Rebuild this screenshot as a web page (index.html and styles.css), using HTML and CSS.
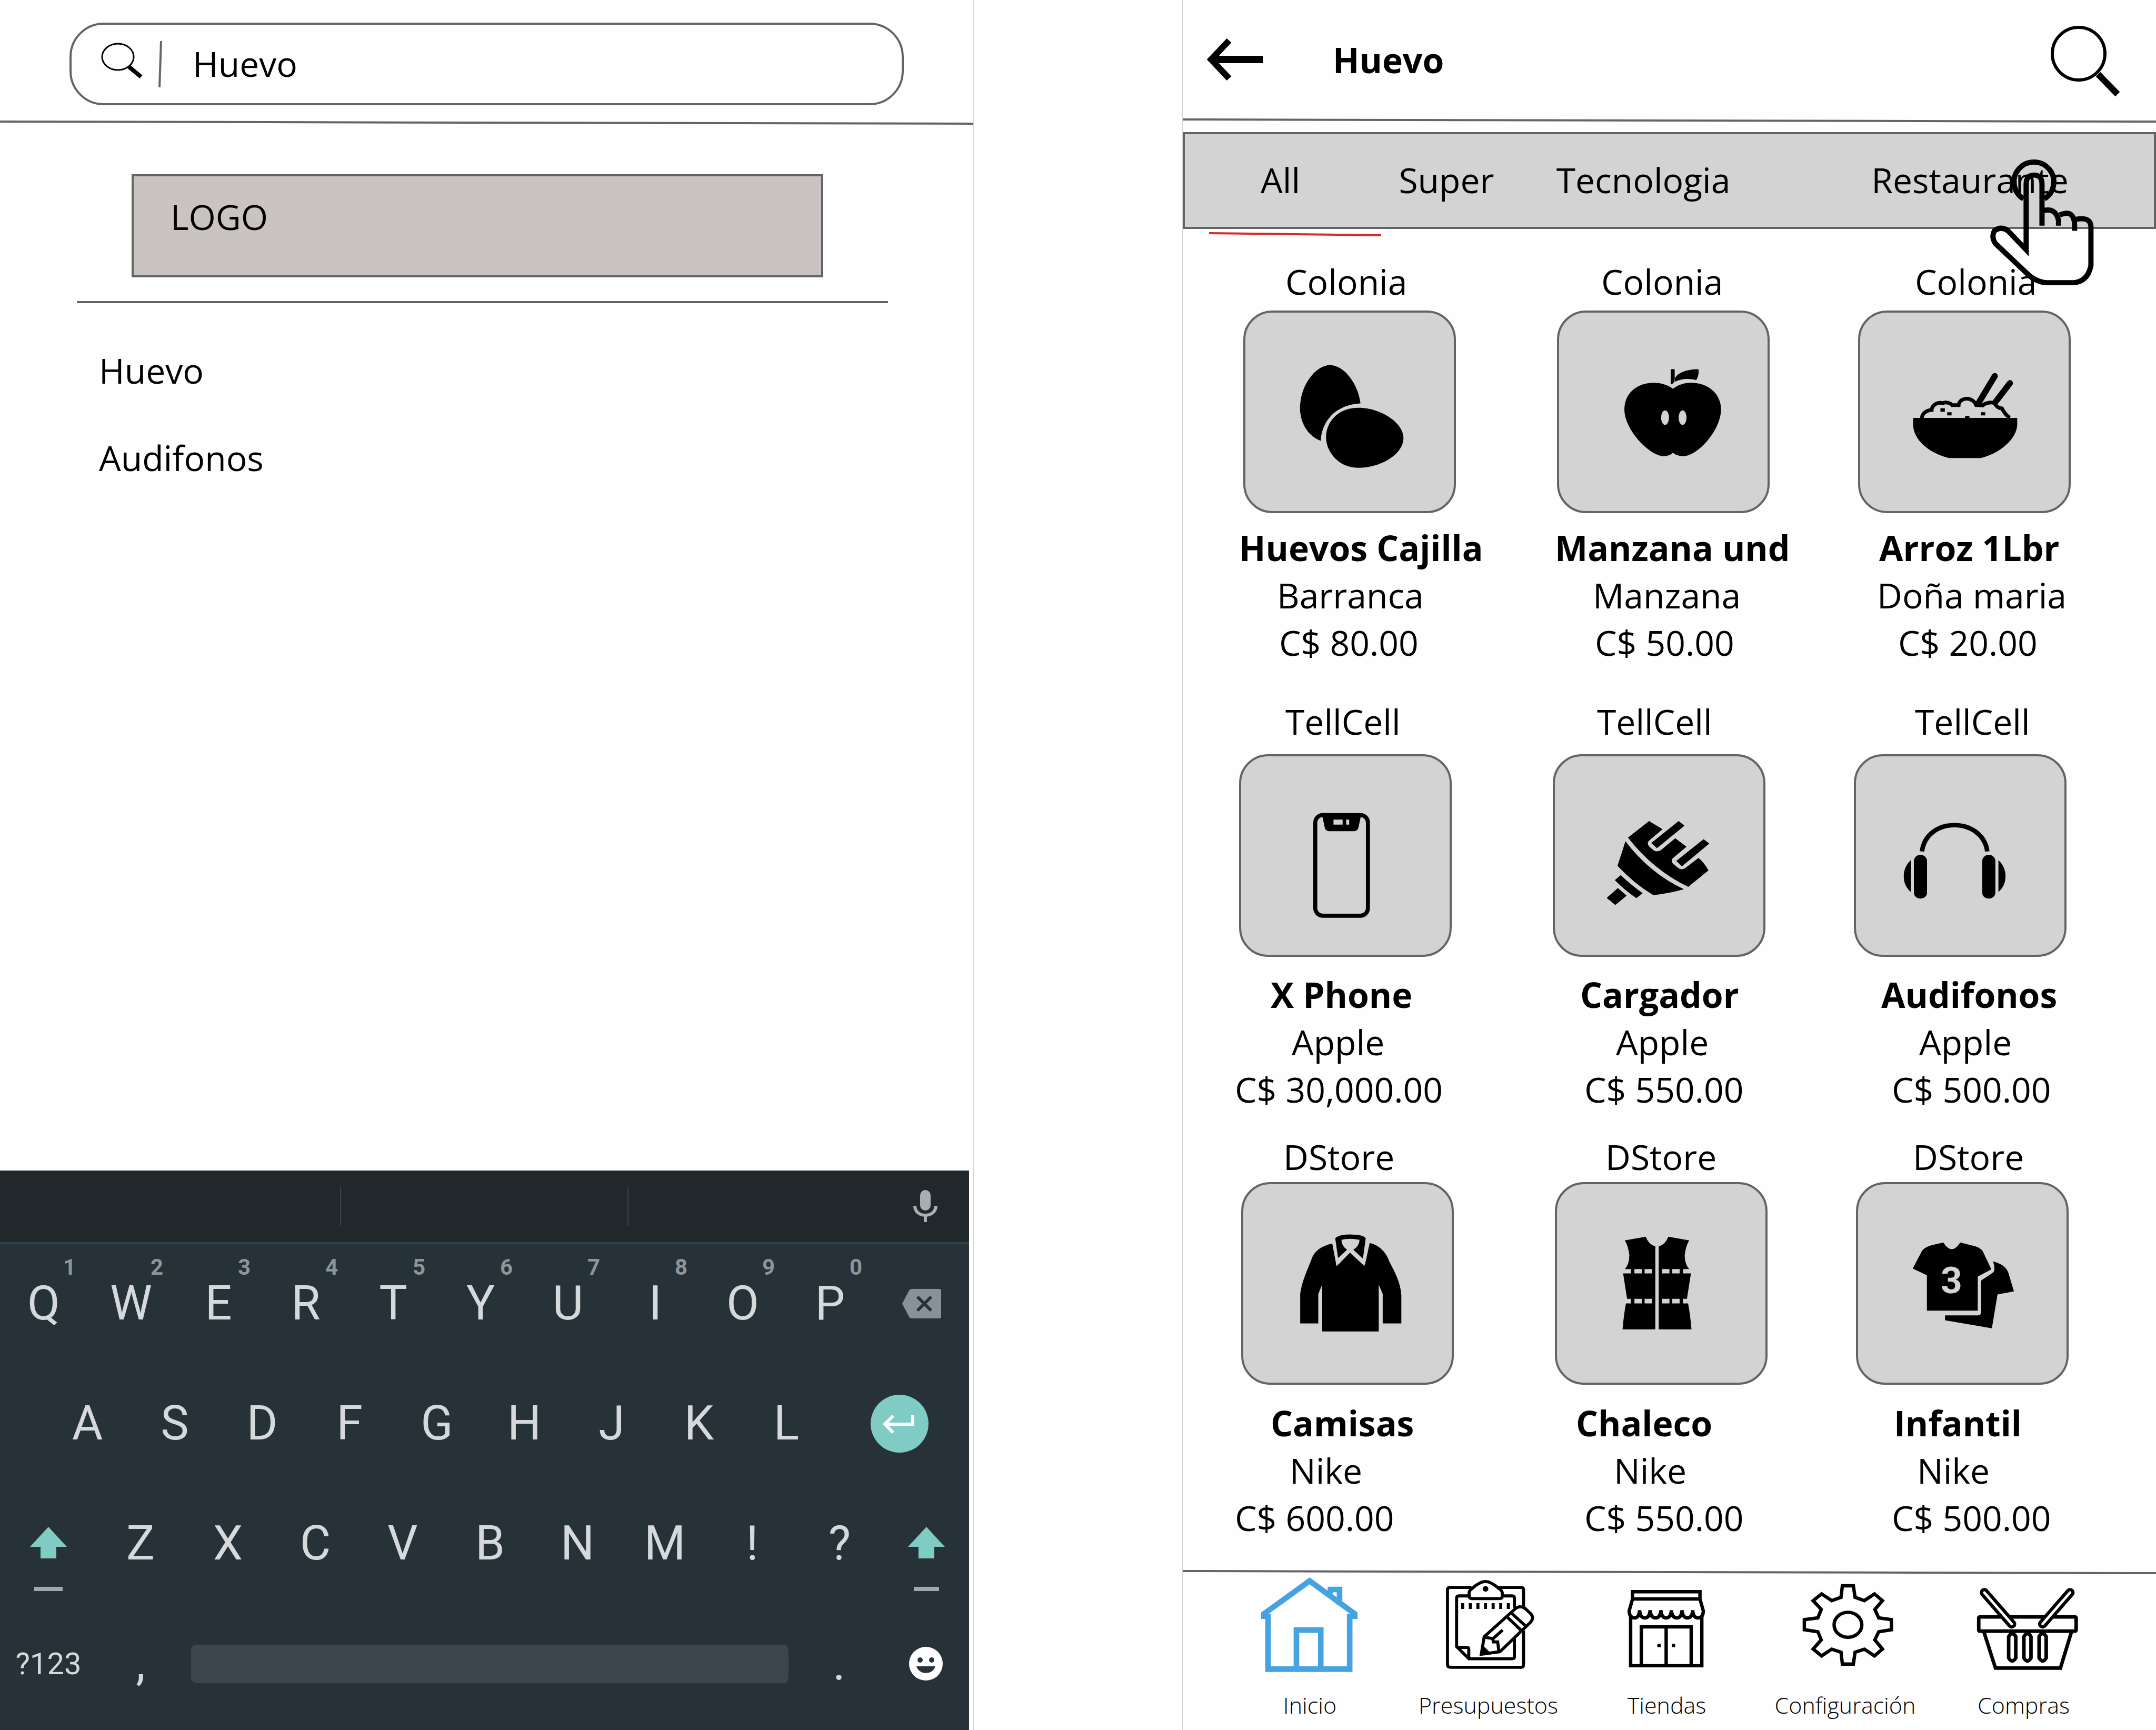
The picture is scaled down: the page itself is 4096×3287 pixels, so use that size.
FILE: index.html
```html
<!DOCTYPE html>
<html lang="es">
<head>
<meta charset="utf-8">
<meta name="viewport" content="width=device-width, initial-scale=1">
<title>Huevo</title>
<link rel="stylesheet" href="styles.css">
</head>
<body>
<main class="screens">

  <section class="screen search-screen">
    <form class="search-box" role="search">
      <label class="search-label" for="q" aria-label="Buscar">
        <svg class="search-icon" viewBox="0 0 80 82"><ellipse cx="32" cy="27" rx="30" ry="25" fill="none" stroke="#000" stroke-width="3"/><path d="M53 46L76 65" stroke="#000" stroke-width="8"/></svg>
      </label>
      <svg class="search-bar" viewBox="0 0 8 88"><path d="M6 0L3 88" stroke="#646464" stroke-width="4"/></svg>
      <input class="search-input" id="q" type="text" value="Huevo">
    </form>
    <svg class="rule" viewBox="0 0 100 8" preserveAspectRatio="none"><path d="M0 2L100 6" stroke="#646464" stroke-width="4" vector-effect="non-scaling-stroke"/></svg>
    <div class="logo">LOGO</div>
    <hr class="divider">
    <nav class="suggestions">
      <a href="#">Huevo</a>
      <a href="#">Audifonos</a>
    </nav>

    <div class="keyboard">
      <div class="strip">
        <span></span><span></span>
        <button class="key mic" aria-label="Voz"><svg width="46" height="62" viewBox="0 0 46 62"><rect x="13" y="0" width="20" height="39" rx="10" fill="#a9aeb0"/><path d="M3 30C3 54 43 54 43 30M23 48V61" fill="none" stroke="#a9aeb0" stroke-width="6"/></svg></button>
      </div>
      <div class="keys keys-top">
        <button class="key">Q<sup>1</sup></button><button class="key">W<sup>2</sup></button><button class="key">E<sup>3</sup></button><button class="key">R<sup>4</sup></button><button class="key">T<sup>5</sup></button><button class="key">Y<sup>6</sup></button><button class="key">U<sup>7</sup></button><button class="key">I<sup>8</sup></button><button class="key">O<sup>9</sup></button><button class="key">P<sup>0</sup></button>
        <button class="key" aria-label="Borrar"><svg width="74" height="56" viewBox="0 0 74 56"><path d="M18 0H70Q74 0 74 4V52Q74 56 70 56H18Q15 56 13 53L0 28L13 3Q15 0 18 0Z" fill="#87919a"/><path d="M29 15L55 41M55 15L29 41" stroke="#263238" stroke-width="6"/></svg></button>
      </div>
      <div class="keys keys-home">
        <button class="key">A</button><button class="key">S</button><button class="key">D</button><button class="key">F</button><button class="key">G</button><button class="key">H</button><button class="key">J</button><button class="key">K</button><button class="key">L</button>
        <button class="key" aria-label="Intro"><svg width="112" height="112" viewBox="0 0 112 112"><circle cx="56" cy="56" r="55" fill="#80cbc4"/><path d="M81 40V57H30M44 41L28 57L44 73" fill="none" stroke="#fff" stroke-width="6"/></svg></button>
      </div>
      <div class="keys keys-low">
        <button class="key" aria-label="Mayúsculas"><svg width="74" height="184" viewBox="0 0 74 184"><path d="M37 60L72 98H52V120H22V98H2Z" fill="#80cbc4"/><path d="M10 178H64" stroke="#a0a8ab" stroke-width="8"/></svg></button>
        <button class="key">Z</button><button class="key">X</button><button class="key">C</button><button class="key">V</button><button class="key">B</button><button class="key">N</button><button class="key">M</button><button class="key">!</button><button class="key">?</button>
        <button class="key" aria-label="Mayúsculas"><svg width="74" height="184" viewBox="0 0 74 184"><path d="M37 60L72 98H52V120H22V98H2Z" fill="#80cbc4"/><path d="M13 178H61" stroke="#a0a8ab" stroke-width="8"/></svg></button>
      </div>
      <div class="keys keys-space">
        <button class="key key-mode">?123</button>
        <button class="key">,</button>
        <button class="key space" aria-label="Espacio"></button>
        <button class="key">.</button>
        <button class="key" aria-label="Emoji"><svg width="64" height="64" viewBox="0 0 64 64"><circle cx="32" cy="32" r="32" fill="#fff"/><circle cx="21" cy="25" r="5" fill="#263238"/><circle cx="43" cy="25" r="5" fill="#263238"/><path d="M14 37H50C45 54 19 54 14 37Z" fill="#263238"/></svg></button>
      </div>
    </div>
  </section>

  <section class="screen results-screen">
    <header class="topbar">
      <button class="icon-button" aria-label="Volver"><svg width="108" height="82" viewBox="0 0 108 82"><path d="M8 41H107" stroke="#000" stroke-width="14"/><path d="M43 5L9 41L43 77" fill="none" stroke="#000" stroke-width="12"/></svg></button>
      <h1 class="title">Huevo</h1>
      <button class="icon-button" aria-label="Buscar"><svg width="132" height="142" viewBox="0 0 132 142"><circle cx="53" cy="60" r="50" fill="none" stroke="#000" stroke-width="6"/><path d="M90 99L127 137" stroke="#000" stroke-width="12"/></svg></button>
    </header>
    <svg class="rule" viewBox="0 0 100 8" preserveAspectRatio="none"><path d="M0 2L100 6" stroke="#646464" stroke-width="4" vector-effect="non-scaling-stroke"/></svg>
    <nav class="tabs">
      <button class="tab">All</button>
      <button class="tab">Super</button>
      <button class="tab">Tecnologia</button>
      <button class="tab">Restaurante</button>
    </nav>
    <svg class="tab-marker" viewBox="0 0 327 8"><path d="M0 2L327 6" stroke="#dc2828" stroke-width="4"/></svg>

    <svg class="pointer" viewBox="0 0 780 840" fill="none" stroke="#000" stroke-width="31"><path d="M272 276A118 118 0 1 1 396 276"/><path d="M382 435V190Q382 135 335 135Q288 135 288 190V578L180 465Q140 435 100 465Q80 500 105 540L290 715Q345 770 410 773H570Q655 765 672 670V440Q670 380 582 398M575 465V425Q570 335 487 372M480 435V405Q465 325 385 347"/></svg>

    <div class="shelf shelf-food">
      <article class="product">
        <p class="in-80">Colonia</p>
        <div class="tile"><svg viewBox="4 4 411 392"><g transform="translate(-52.5 -32) scale(1.1161 .4783)"><path d="M200 292C175 292 147 375 147 470C147 540 165 590 184 605C184 540 205 455 254 450C250 370 225 292 200 292Z"/><path d="M250 468C290 468 330 530 330 593C330 660 290 716 250 716C215 716 193 650 193 590C193 525 215 468 250 468Z"/></g></svg></div>
        <h2 class="out-8">Huevos Cajilla</h2><p class="in-64">Barranca</p><p class="in-68">C$ 80.00</p>
      </article>
      <article class="product">
        <p class="in-84">Colonia</p>
        <div class="tile"><svg viewBox="4 4 411 392"><g transform="translate(-671 -32) scale(1.1161 .4783)"><path d="M806 390C798 375 785 365 772 365C742 365 720 410 720 475C720 560 765 668 790 668C797 668 802 662 806 654C810 662 816 668 824 668C850 668 891 560 891 475C891 410 868 365 838 365C825 365 814 375 806 390Z"/><path d="M802 309H809V360L804 372L802 368ZM851 309C830 309 808 325 808 362C820 348 835 346 847 354C851 340 852 325 851 309Z"/><g fill="#d3d3d3"><ellipse cx="792" cy="509" rx="7" ry="30"/><ellipse cx="823" cy="509" rx="7" ry="30"/></g></g></svg></div>
        <h2 class="out-4">Manzana und</h2><p class="in-68">Manzana</p><p class="in-72">C$ 50.00</p>
      </article>
      <article class="product">
        <p class="in-108">Colonia</p>
        <div class="tile"><svg viewBox="4 4 411 392"><g transform="translate(95.5 108) scale(.3333)"><path d="M38 312H655V350C655 430 560 520 440 550H250C130 520 38 440 38 350Z"/><path d="M90 312C92 285 120 265 148 265C150 235 185 216 215 224C235 215 260 225 270 236H308C310 210 335 198 357 198C380 198 405 215 412 236L450 238C470 220 500 218 520 224C530 245 545 255 565 256C575 275 590 300 612 310" fill="none" stroke="#000" stroke-width="22"/><path d="M522 64L425 225M612 106L528 215" stroke="#000" stroke-width="36" stroke-linecap="round"/><path d="M200 255H226V275H200ZM240 278H266V297H240ZM440 278H466V297H440ZM346 300H372V314H346Z"/></g></svg></div>
        <h2 class="in-40">Arroz 1Lbr</h2><p class="in-36">Doña maria</p><p class="in-76">C$ 20.00</p>
      </article>
    </div>

    <div class="shelf shelf-tech">
      <article class="product">
        <p class="in-88">TellCell</p>
        <div class="tile"><svg viewBox="4 4 411 392"><rect x="150" y="120" width="104" height="199" rx="15" fill="none" stroke="#000" stroke-width="8"/><path d="M163 118H241L235 146Q233 152 226 152H178Q171 152 169 146Z"/><path d="M186 129H204V139H186ZM211 129H217V139H211Z" fill="#d3d3d3"/></svg></div>
        <h2 class="in-60">X Phone</h2><p class="in-100">Apple</p><p class="out-8">C$ 30,000.00</p>
      </article>
      <article class="product">
        <p class="in-84">TellCell</p>
        <div class="tile"><svg viewBox="4 4 411 392"><g transform="translate(88 112) scale(.3333)"><path d="M305 60L385 108L305 176Q290 190 305 210L335 235Q355 245 375 232L460 162L527 212L448 278Q430 293 447 312L480 340Q500 352 520 338L598 278Q635 310 657 352L537 450Q330 350 180 158Z"/><path d="M480 60L515 87L352 220L318 190ZM628 167L662 193L500 328L466 296Z"/><path d="M165 180Q310 370 512 464Q420 490 330 499Q215 430 118 325Z"/><path d="M137 380Q200 440 267 487L230 517Q160 470 102 410ZM120 457L172 502L105 557L54 515Z"/></g></svg></div>
        <h2 class="in-52">Cargador</h2><p class="in-120">Apple</p><p class="in-60">C$ 550.00</p>
      </article>
      <article class="product">
        <p class="in-116">TellCell</p>
        <div class="tile"><svg viewBox="4 4 411 392"><path d="M134 192C138 160 165 140 198 140S259 160 263 192" fill="none" stroke="#000" stroke-width="9"/><rect x="118" y="199" width="26" height="86" rx="12"/><rect x="253" y="199" width="26" height="86" rx="12"/><path d="M112 209Q98 222 98 241T112 272ZM285 209Q299 222 299 241T285 272Z"/></svg></div>
        <h2 class="in-52">Audifonos</h2><p class="in-124">Apple</p><p class="in-72">C$ 500.00</p>
      </article>
    </div>

    <div class="shelf shelf-clothes">
      <article class="product">
        <p class="in-80">DStore</p>
        <div class="tile"><svg viewBox="4 4 411 392"><g transform="translate(-48 -102) scale(1.1161 .5293)"><path d="M204 422L211 497H216L235 452L257 497H262L270 420C290 430 300 460 305 490C315 530 325 570 326 615V720H293V610L286 575V750H186V575L179 610V720H147V610C150 560 160 520 167 480C172 450 185 430 204 422Z"/><path d="M209 402Q215 388 235 388Q258 388 263 402L258 478L241 445Q252 430 252 408Q235 400 220 408Q220 430 230 445L214 476Z"/><path d="M206 418L213 497L235 450L259 497L267 418" fill="none" stroke="#d3d3d3" stroke-width="5"/></g></svg></div>
        <h2 class="in-56">Camisas</h2><p class="in-92">Nike</p><p class="out-12">C$ 600.00</p>
      </article>
      <article class="product">
        <p class="in-96">DStore</p>
        <div class="tile"><svg viewBox="4 4 411 392"><g transform="translate(-666 -102) scale(1.1161 .5293)"><path d="M720 410L757 396Q762 425 774 432V517H720Q728 500 728 465Q726 430 720 410ZM834 410L797 396Q792 425 780 432V517H834Q826 500 826 465Q828 430 834 410Z"/><path d="M717 533H774V628H724ZM837 533H780V628H830ZM722 645H774V742H716Q718 690 722 645ZM832 645H780V742H838Q836 690 832 645Z"/><path d="M731 515H737V535H731ZM750 515H755V535H750ZM768 515H774V535H768ZM780 515H786V535H780ZM799 515H804V535H799ZM817 515H823V535H817ZM731 626H737V647H731ZM750 626H755V647H750ZM768 626H774V647H768ZM780 626H786V647H780ZM799 626H804V647H799ZM817 626H823V647H817Z"/></g></svg></div>
        <h2 class="in-40">Chaleco</h2><p class="in-112">Nike</p><p class="in-56">C$ 550.00</p>
      </article>
      <article class="product">
        <p class="in-108">DStore</p>
        <div class="tile"><svg viewBox="4 4 411 392"><g transform="translate(-1260 -102) scale(1.1161 .5293)"><path d="M1283 418Q1298 468 1313 418L1340 432Q1352 440 1355 460L1368 518L1344 545V672H1254V540L1229 515L1245 450Q1250 435 1262 428Z"/><path d="M1371 488Q1393 500 1398 530L1408 600L1379 612L1369 738L1286 708V690H1343Q1350 690 1350 678V560L1371 530Q1376 520 1371 488Z"/></g><text class="shirt-number" x="188" y="219">3</text></svg></div>
        <h2 class="in-72">Infantil</h2><p class="in-116">Nike</p><p class="in-68">C$ 500.00</p>
      </article>
    </div>

    <svg class="rule rule-bottom" viewBox="0 0 100 8" preserveAspectRatio="none"><path d="M0 2L100 6" stroke="#646464" stroke-width="4" vector-effect="non-scaling-stroke"/></svg>
    <nav class="bottom-nav">
      <a href="#" aria-current="page"><svg viewBox="0 0 220 200" fill="none" stroke="#46a3e2" stroke-width="11"><path d="M19 88V78L109 13L198 78V88"/><path d="M27 78V187H188V78M83 187V110H131V187M150 38V30H168V60"/></svg>Inicio</a>
      <a href="#"><svg viewBox="0 0 220 200"><g transform="translate(-7 -4) scale(.3333)" fill="none" stroke="#000" stroke-width="18"><path d="M250 90H122Q108 90 108 105V545Q108 562 125 562H545Q558 562 558 545V345M410 90H545Q558 90 558 105V205"/><path d="M235 140H175Q162 140 162 155V440L235 512H490Q504 512 504 500V385M430 140H490Q504 140 504 152V210M165 445H225Q234 445 234 455V510"/><path d="M236 145V118Q240 105 255 95Q300 55 333 55Q365 55 410 95Q428 105 432 120V145Q430 156 415 156H252Q240 156 236 145Z"/><circle cx="333" cy="98" r="17" fill="#000" stroke="none"/><path d="M198 183V217M243 183V217M288 183V217M333 183V217M378 183V217M423 183V217M468 183V217"/><path d="M325 382L510 215Q535 195 565 212L600 245Q622 270 600 295L418 470L308 485ZM482 238L570 318M458 262L545 345M325 384L375 392L380 412H405L412 470M376 394L434 342"/><path d="M315 430L358 472L303 487Z" fill="#000" stroke="none"/></g></svg>Presupuestos</a>
      <a href="#"><svg viewBox="0 0 220 200"><g transform="translate(21 6) scale(.3333)" fill="none" stroke="#000" stroke-width="20"><path d="M63 128V85H462V128ZM63 128L43 200Q45 240 75 240Q102 240 105 195Q108 240 136 240Q164 240 167 195Q170 240 199 240Q228 240 231 195Q234 240 262 240Q290 240 293 195Q296 240 325 240Q353 240 356 195Q359 240 388 240Q416 240 419 195Q422 240 450 240Q480 240 482 200L462 128"/><path d="M52 225V523H473V225M115 523V293H410V523M262 293V523"/><path d="M210 403H230M295 403H315"/></g></svg>Tiendas</a>
      <a href="#"><svg viewBox="0 0 220 200"><g transform="translate(-331 6) scale(.3333)" fill="none" stroke="#000" stroke-width="20"><path d="M1305 50H1370L1380 118L1435 138L1495 98L1542 138L1497 190L1520 240L1595 250V310L1520 322L1497 370L1542 424L1495 465L1435 425L1380 443L1370 513H1305L1297 443L1242 425L1182 465L1132 424L1180 370L1160 322L1080 310V250L1160 240L1180 190L1132 138L1182 98L1242 138L1297 118Z"/><ellipse cx="1338" cy="281" rx="82" ry="74"/></g></svg>Configuración</a>
      <a href="#"><svg viewBox="0 0 220 200" fill="none" stroke="#000" stroke-width="7"><rect x="21" y="84" width="192" height="28" rx="2"/><path d="M31 113L54 185H182L204 113"/><path d="M80 165V123Q87 111 94 123V165Q87 177 80 165ZM110 165V123Q117 111 124 123V165Q117 177 110 165ZM140 165V123Q147 111 154 123V165Q147 177 140 165Z"/><path d="M32 36L86 98M201 36L147 98" stroke-width="18" stroke-linecap="round"/><path d="M32 36L86 98M201 36L147 98" stroke="#fefefe" stroke-width="5" stroke-linecap="round"/></svg>Compras</a>
    </nav>
  </section>
</main>
</body>
</html>
```
FILE: styles.css
```css
* { box-sizing: border-box; }

body {
  margin: 0;
  background: #fff;
  color: #000;
  font: 66px/90px "Open Sans", "Noto Sans", sans-serif;
}

h1, h2, p { margin: 0; font-size: inherit; font-weight: inherit; }
a { color: inherit; text-decoration: none; }
svg { display: block; flex: none; }

button {
  margin: 0;
  padding: 0;
  border: 0;
  background: none;
  color: inherit;
  font: inherit;
}

.screens {
  display: grid;
  grid-template-columns: 1850fr 1850fr;
  column-gap: 396px;
  min-height: 100vh;
}

.screen {
  position: relative;
  display: flex;
  flex-direction: column;
  min-width: 0;
  background: #fefefe;
}

.search-screen { border-right: 1px solid #d4d4d4; }
.results-screen { border-left: 1px solid #d4d4d4; }

.rule { width: 100%; height: 8px; }

/* Search screen */
.search-box {
  display: flex;
  align-items: center;
  height: 157px;
  margin: 43px 132px 29px;
  padding: 0 56px;
  border: 4px solid #646464;
  border-radius: 65px;
}

.search-icon { width: 80px; height: 82px; }
.search-bar { width: 8px; height: 88px; margin: 0 58px 0 28px; }

.search-input {
  flex: 1;
  min-width: 0;
  padding: 0 0 4px;
  border: 0;
  outline: 0;
  background: none;
  color: #000;
  font: inherit;
}

.logo {
  height: 196px;
  margin: 94px 285px 0 250px;
  padding: 31px 70px;
  border: 4px solid #646464;
  background: #c9c3c1;
}

.divider {
  width: auto;
  height: 4px;
  margin: 45px 162px 0 146px;
  border: 0;
  background: #646464;
}

.suggestions {
  display: flex;
  flex-direction: column;
  align-items: flex-start;
  gap: 76px;
  padding: 82px 188px;
}

/* Keyboard */
.keyboard {
  margin: auto 8px 0 0;
  padding-bottom: 12px;
  background: #263238;
  color: #d5d9db;
  font: 90px/100px Roboto, sans-serif;
}

.strip {
  display: grid;
  grid-template-columns: 648fr 546fr 647fr;
  align-items: center;
  height: 139px;
  border-bottom: 3px solid #34434b;
  background: #22272b;
}

.strip span { height: 75px; border-right: 2px solid #3b4145; }
.strip .mic { justify-content: flex-end; padding-right: 60px; }

.keys { display: grid; height: 228px; }
.keys-top { grid-template-columns: repeat(10, 166fr) 181fr; }
.keys-home { grid-template-columns: repeat(9, 166fr) 264fr; padding-left: 83px; }
.keys-low { grid-template-columns: 184fr repeat(9, 166fr) 163fr; }
.keys-space { grid-template-columns: 184fr 166fr 1161fr 166fr 164fr; }

.key {
  position: relative;
  display: flex;
  align-items: center;
  justify-content: center;
}

.key sup {
  position: absolute;
  top: 24px;
  left: 120px;
  color: #8d9598;
  font: 700 42px/42px Roboto, sans-serif;
}

.key-mode { font-size: 58px; }

.space {
  height: 73px;
  margin: 0 13px;
  align-self: center;
  border-radius: 10px;
  background: #3c474d;
}

/* Results screen */
.topbar {
  display: flex;
  align-items: center;
  height: 225px;
  padding: 0 68px 0 45px;
}

.title { flex: 1; padding-left: 132px; font-weight: 700; }

.tabs {
  display: grid;
  grid-template-columns: 263fr 300fr 600fr 538fr;
  height: 184px;
  margin-top: 18px;
  padding: 0 0 4px 144px;
  border: 4px solid #646464;
  background: #d3d3d3;
}

.tab { text-align: left; }

.tab-marker { width: 327px; height: 8px; margin: 6px 0 40px 50px; }

.pointer {
  position: absolute;
  top: 289px;
  right: 89px;
  width: 250px;
  height: 270px;
}

.shelf {
  display: grid;
  grid-template-columns: 596fr 572fr 566fr;
}

.shelf-food { padding: 0 0 0 115px; --label-gap: 11px; --title-gap: 20px; }
.shelf-tech { padding: 0 8px 0 107px; margin-top: 60px; --label-gap: 18px; --title-gap: 26px; }
.shelf-clothes { padding: 0 4px 0 111px; margin-top: 38px; --label-gap: 4px; --title-gap: 27px; }

.product { white-space: nowrap; }
.product h2 { font-weight: 700; }

.tile {
  width: 404px;
  height: 385px;
  margin: var(--label-gap) 0 var(--title-gap);
  border: 4px solid #646464;
  border-radius: 55px;
  background: #d3d3d3;
}

.tile svg { width: 100%; height: 100%; }

.shirt-number {
  fill: #d3d3d3;
  font: 700 74px Roboto, sans-serif;
  text-anchor: middle;
}

.out-12 { margin-left: -12px; }
.out-8 { margin-left: -8px; }
.out-4 { margin-left: -4px; }
.in-36 { margin-left: 36px; }
.in-40 { margin-left: 40px; }
.in-52 { margin-left: 52px; }
.in-56 { margin-left: 56px; }
.in-60 { margin-left: 60px; }
.in-64 { margin-left: 64px; }
.in-68 { margin-left: 68px; }
.in-72 { margin-left: 72px; }
.in-76 { margin-left: 76px; }
.in-80 { margin-left: 80px; }
.in-84 { margin-left: 84px; }
.in-88 { margin-left: 88px; }
.in-92 { margin-left: 92px; }
.in-96 { margin-left: 96px; }
.in-100 { margin-left: 100px; }
.in-108 { margin-left: 108px; }
.in-112 { margin-left: 112px; }
.in-116 { margin-left: 116px; }
.in-120 { margin-left: 120px; }
.in-124 { margin-left: 124px; }

.rule-bottom { margin-top: auto; }

.bottom-nav {
  display: grid;
  grid-template-columns: repeat(5, 1fr);
  padding: 0 82px 0 72px;
  height: 296px;
}

.bottom-nav a {
  display: flex;
  flex-direction: column;
  align-items: center;
  gap: 26px;
  font-size: 43px;
  font-weight: 300;
  line-height: 60px;
}

.bottom-nav svg { width: 212px; height: 193px; }
```
